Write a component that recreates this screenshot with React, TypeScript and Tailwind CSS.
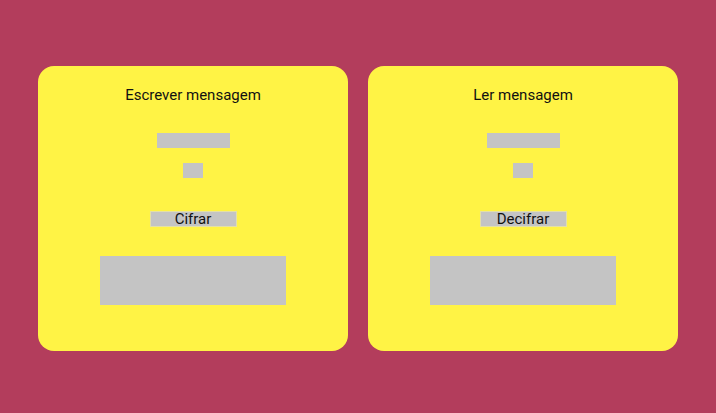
import { useState } from 'react';

interface PanelProps {
  title: string;
  action: string;
}

function Panel({ title, action }: PanelProps) {
  const [text, setText] = useState('');
  const [key, setKey] = useState('');

  return (
    <div className="w-[310px] h-[285px] bg-[#fff345] rounded-2xl flex flex-col items-center pt-[20px]">
      {/* Title */}
      <h2 className="text-[15px] leading-[18px] text-[#111]">{title}</h2>

      {/* Message + key */}
      <input
        value={text}
        onChange={(e) => setText(e.target.value)}
        className="mt-[29px] w-[73px] h-[15px] bg-[#c4c4c4] outline-none border-0 p-0 text-[11px]"
      />
      <input
        value={key}
        onChange={(e) => setKey(e.target.value)}
        className="mt-[15px] w-[20px] h-[15px] bg-[#c4c4c4] outline-none border-0 p-0 text-[11px]"
      />

      {/* Action */}
      <button className="mt-[33px] w-[87px] h-[16px] bg-[#c4c4c4] border border-[#e4e0a6] p-0 text-[15px] leading-[14px] text-[#111]">
        {action}
      </button>

      {/* Result */}
      <div className="mt-[29px] w-[186px] h-[49px] bg-[#c4c4c4]" />
    </div>
  );
}

export default function App() {
  return (
    <div
      className="w-full min-h-[413px] bg-[#b33d5c] flex justify-center gap-5 pt-[66px]"
      style={{ fontFamily: 'Roboto, "Liberation Sans", sans-serif' }}
    >
      <Panel title="Escrever mensagem" action="Cifrar" />
      <Panel title="Ler mensagem" action="Decifrar" />
    </div>
  );
}
